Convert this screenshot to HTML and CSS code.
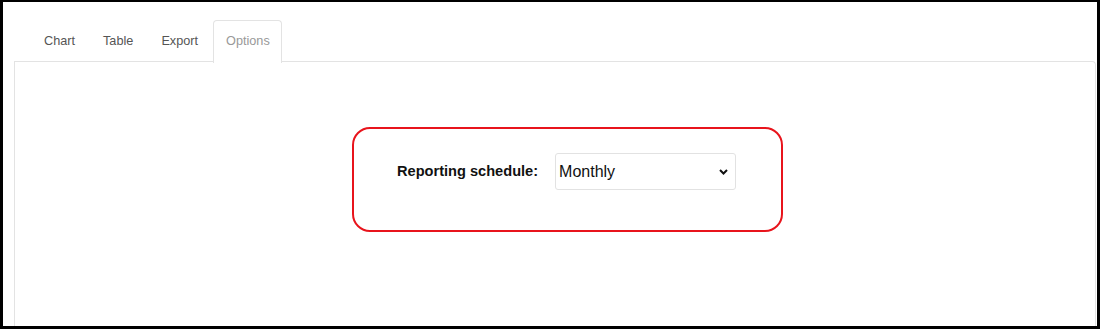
FILE: index.html
```html
<!DOCTYPE html>
<html>
<head>
<meta charset="utf-8">
<link rel="stylesheet" href="styles.css">
</head>
<body>
<div class="frame">
  <ul class="tabs">
    <li class="tab">Chart</li>
    <li class="tab">Table</li>
    <li class="tab">Export</li>
    <li class="tab active">Options</li>
  </ul>
  <div class="panel">
    <div class="highlight">
      <label class="field-label" for="sched">Reporting schedule:</label>
      <div class="select-wrap">
        <select id="sched" class="select">
          <option>Monthly</option>
          <option>Weekly</option>
          <option>Daily</option>
        </select>
        <svg class="chevron" width="9" height="6" viewBox="0 0 9 6"><path d="M1 1 L4.5 4.5 L8 1" fill="none" stroke="#111" stroke-width="2"/></svg>
      </div>
    </div>
  </div>
</div>
</body>
</html>
```

FILE: styles.css
```css
* { box-sizing: border-box; }
html, body { margin: 0; padding: 0; background: #fff; }
body { font-family: "Liberation Sans", Arial, sans-serif; }
.frame {
  width: 1100px;
  height: 329px;
  border-style: solid;
  border-color: #000;
  border-width: 2px 3px 3px 3px;
  padding: 18px 1px 0 11px;
  display: flex;
  flex-direction: column;
  overflow: hidden;
}
.tabs {
  list-style: none;
  margin: 0;
  padding: 0 0 0 17px;
  display: flex;
  height: 42px;
  position: relative;
  z-index: 1;
  margin-bottom: -1px;
}
.tab {
  font-size: 12.7px;
  color: #555;
  padding: 0 12px;
  margin-right: 2px;
  line-height: 41px;
  border: 1px solid transparent;
  border-bottom: none;
  border-radius: 4px 4px 0 0;
}
.tab.active {
  color: #999;
  background: #fff;
  border-color: #e3e3e3;
  height: 43px;
  padding: 0 11px 0 12px;
}
.panel {
  flex: 1;
  border: 1px solid #e3e3e3;
  border-bottom: none;
  border-radius: 0 4px 0 0;
  padding: 65px 0 0 337px;
}
.highlight {
  width: 431px;
  height: 105px;
  border: 2px solid #e8141c;
  border-radius: 18px;
  display: flex;
  align-items: flex-start;
  padding: 24px 0 0 43px;
}
.field-label {
  font-size: 14.6px;
  font-weight: bold;
  color: #111;
  line-height: 36px;
  margin-right: 17px;
}
.select-wrap {
  position: relative;
  width: 181px;
  height: 37px;
}
.select {
  appearance: none;
  -webkit-appearance: none;
  width: 100%;
  height: 100%;
  border: 1px solid #e2e2e2;
  border-radius: 3px;
  background: #fff;
  font-family: "Liberation Sans", Arial, sans-serif;
  font-size: 16px;
  color: #111;
  padding: 0 0 0 3px;
  margin: 0;
}
.chevron {
  position: absolute;
  right: 8px;
  top: 16px;
  pointer-events: none;
}
```
